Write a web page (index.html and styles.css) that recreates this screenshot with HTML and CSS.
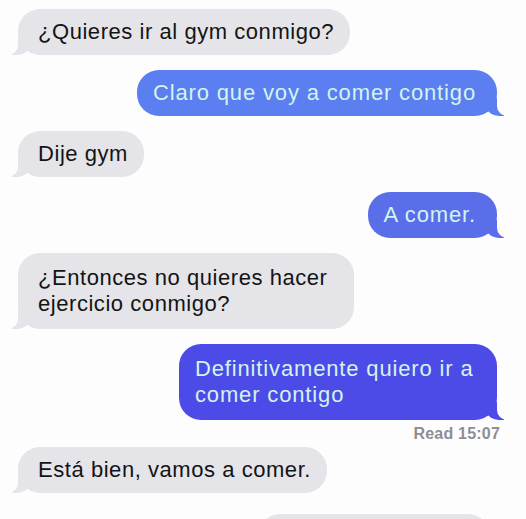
FILE: index.html
```html
<!DOCTYPE html>
<html lang="es">
<head>
<meta charset="utf-8">
<title>Mensajes</title>
<link rel="stylesheet" href="styles.css">
</head>
<body>
<main class="chat">
  <div class="msg in"><div class="bubble gray">¿Quieres ir al gym conmigo?</div></div>
  <div class="msg out"><div class="bubble blue blue-a">Claro que voy a comer contigo</div></div>
  <div class="msg in"><div class="bubble gray">Dije gym</div></div>
  <div class="msg out"><div class="bubble blue blue-b">A comer.</div></div>
  <div class="msg in multi"><div class="bubble gray w-entonces">¿Entonces no quieres hacer ejercicio conmigo?</div></div>
  <div class="msg out multi"><div class="bubble blue blue-c w-def">Definitivamente quiero ir a comer contigo</div></div>
  <div class="read">Read 15:07</div>
  <div class="msg in"><div class="bubble gray">Está bien, vamos a comer.</div></div>
  <div class="msg out"><div class="bubble gray partial">&nbsp;</div></div>
</main>
</body>
</html>
```
FILE: styles.css
```css
html, body {
  margin: 0;
  padding: 0;
  background: #fdfdfd;
  overflow: hidden;
}
.chat {
  display: flex;
  flex-direction: column;
  gap: 15px;
  padding: 9px 29px 0 18px;
  font-family: "Liberation Sans", Arial, Helvetica, sans-serif;
  font-size: 22px;
  letter-spacing: 0.55px;
}
.msg {
  display: flex;
}
.msg.in { justify-content: flex-start; }
.msg.out { justify-content: flex-end; }
.bubble {
  position: relative;
  padding: 10px 16px 10px 20px;
  line-height: 26px;
  border-radius: 22px;
}
.msg.multi .bubble {
  padding-top: 12px;
  padding-bottom: 12px;
}
.gray {
  background: #e4e4e9;
  color: #141414;
}
.blue {
  color: #d2f4ee;
  letter-spacing: 0.85px;
  padding: 10px 21px 10px 16px;
}
.blue-a { background: #5b7ef0; }
.blue-b { background: #5a6ee9; }
.blue-c { background: #4d4be7; }
.w-entonces { width: 300px; }
.w-def { width: 281px; }

.msg.in .bubble::before {
  content: "";
  position: absolute;
  bottom: 0;
  left: -6px;
  width: 20px;
  height: 18px;
  background: #e4e4e9;
  border-bottom-right-radius: 15px;
}
.msg.in .bubble::after {
  content: "";
  position: absolute;
  bottom: 0;
  left: -12px;
  width: 12px;
  height: 18px;
  background: #fdfdfd;
  border-bottom-right-radius: 10px;
}
.msg.out .bubble.blue::before {
  content: "";
  position: absolute;
  bottom: 0;
  right: -7px;
  width: 20px;
  height: 18px;
  background: inherit;
  border-bottom-left-radius: 15px;
}
.msg.out .bubble.blue::after {
  content: "";
  position: absolute;
  bottom: 0;
  right: -13px;
  width: 13px;
  height: 18px;
  background: #fdfdfd;
  border-bottom-left-radius: 10px;
}
.read {
  align-self: flex-end;
  margin-top: -9px;
  margin-bottom: -10px;
  margin-right: -3px;
  font-size: 16px;
  letter-spacing: 0.2px;
  font-weight: bold;
  color: #8d8d92;
  line-height: 16px;
}
.partial {
  width: 196px;
  margin-top: 6px;
  margin-right: 7px;
}
```
